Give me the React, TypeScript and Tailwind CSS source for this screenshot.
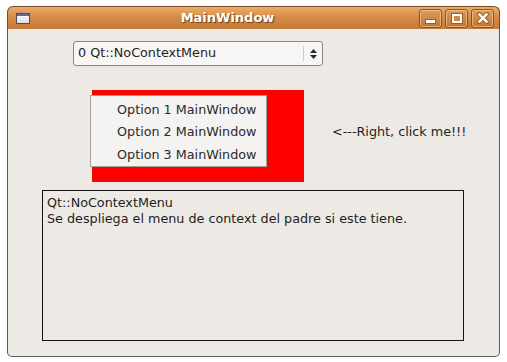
import React from 'react';

const font = { fontFamily: '"DejaVu Sans", "Liberation Sans", sans-serif' };

function TitleButton({ children }: { children: React.ReactNode }) {
  return (
    <div className="w-[23px] h-[19px] rounded-[3px] border border-[#8a5322] bg-gradient-to-b from-[#dc9c5c] to-[#c07634] shadow-[inset_0_0_0_1px_rgba(255,220,170,0.55)] flex items-center justify-center">
      {children}
    </div>
  );
}

export default function App() {
  return (
    <div className="w-[507px] h-[362px] bg-white pt-[6px] pl-[7px]" style={font}>
      <div className="w-[493px] h-[351px] flex flex-col">
        {/* Title bar */}
        <div className="h-[23px] rounded-t-[6px] border border-b-0 border-[#7b4b20] bg-gradient-to-b from-[#e9ac6c] via-[#d48a45] to-[#c47b37] flex items-center">
          <div className="ml-[8px] w-[14px] h-[11px] border border-[#4d4d55] bg-gradient-to-b from-[#ffffff] to-[#dcdce4] shadow-[inset_0_2px_0_#5b6ea8]" />
          <div className="flex-1 text-center text-white font-bold text-[13px] pl-[6px] [text-shadow:1px_1px_1px_#6b3e12]">MainWindow</div>
          <div className="flex gap-[3px] mr-[5px]">
            <TitleButton>
              <div className="w-[9px] h-[3px] bg-white mt-[7px] shadow-[0_0_0_1px_#9a5f28]" />
            </TitleButton>
            <TitleButton>
              <div className="w-[10px] h-[9px] border-2 border-white shadow-[0_0_0_1px_#9a5f28]" />
            </TitleButton>
            <TitleButton>
              <svg width="12" height="12" viewBox="0 0 12 12">
                <path d="M2 2 L10 10 M10 2 L2 10" stroke="#9a5f28" strokeWidth="4" strokeLinecap="square" />
                <path d="M2.5 2.5 L9.5 9.5 M9.5 2.5 L2.5 9.5" stroke="white" strokeWidth="2.4" strokeLinecap="square" />
              </svg>
            </TitleButton>
          </div>
        </div>

        {/* Body */}
        <div className="flex-1 bg-[#edeae5] border border-t-0 border-[#5e5a55] rounded-b-[5px] flex flex-col text-[12.75px] text-[#1e1e1e]">
          {/* Combo */}
          <div className="mt-[12px] ml-[65px] w-[250px] h-[25px] rounded-[3px] border border-[#8e8678] bg-[#f7f6f4] flex items-center">
            <span className="flex-1 pl-[4px] leading-none">0 Qt::NoContextMenu</span>
            <div className="w-px h-[15px] bg-[#cfcac2]" />
            <div className="w-[18px] flex flex-col items-center justify-center gap-[2px]">
              <svg width="7" height="4" viewBox="0 0 7 4"><path d="M0 4 L3.5 0 L7 4 Z" fill="#2a2a2a" /></svg>
              <svg width="7" height="4" viewBox="0 0 7 4"><path d="M0 0 L3.5 4 L7 0 Z" fill="#2a2a2a" /></svg>
            </div>
          </div>

          {/* Red area + label */}
          <div className="mt-[24px] ml-[84px] flex items-center">
            <div className="relative w-[212px] h-[92px] bg-[#ff0000]">
              <div className="absolute left-[-2px] top-[5px] w-[177px] h-[72px] bg-[#f5f3f1] border border-[#a69f95] flex flex-col pt-[2px]">
                {['Option 1 MainWindow', 'Option 2 MainWindow', 'Option 3 MainWindow'].map((t) => (
                  <div key={t} className="h-[23px] flex items-center pl-[26px] text-[#2a2a2a]">{t}</div>
                ))}
              </div>
            </div>
            <span className="ml-[28px] mb-[8px]">&lt;---Right, click me!!!</span>
          </div>

          {/* Text box */}
          <div className="mt-[8px] ml-[34px] w-[422px] h-[151px] border border-[#141414] px-[4px] pt-[4px] leading-[16px]">
            <div>Qt::NoContextMenu</div>
            <div>Se despliega el menu de context del padre si este tiene.</div>
          </div>
        </div>
      </div>
    </div>
  );
}
